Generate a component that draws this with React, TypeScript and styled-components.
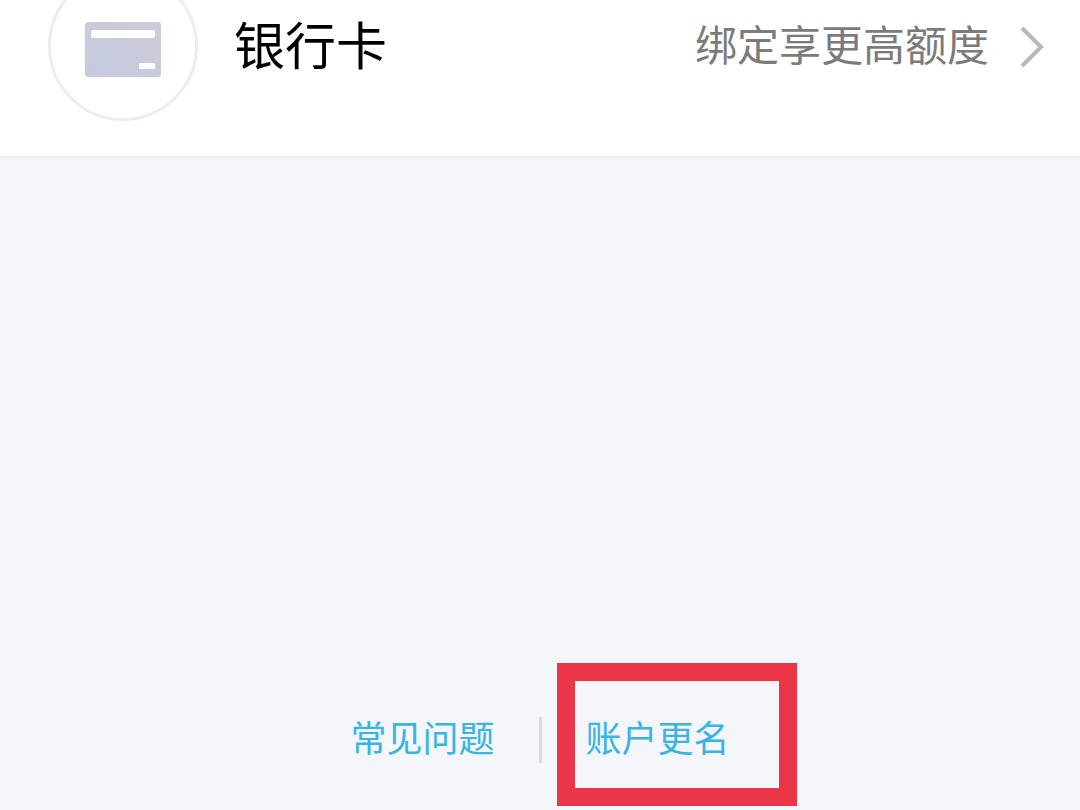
import React from "react";
import styled, { createGlobalStyle } from "styled-components";

const GlobalStyle = createGlobalStyle`
  * { box-sizing: border-box; }
  html, body { margin: 0; }
  body {
    background: #f4f6fa;
    font-family: "Noto Sans CJK SC", sans-serif;
    font-weight: 400;
  }
`;

const Page = styled.div`
  display: flex;
  flex-direction: column;
  min-height: 100vh;
`;

const BankRow = styled.a`
  display: flex;
  align-items: flex-start;
  padding: 0 36px 35px 48px;
  background: #fff;
  border-bottom: 2px solid #eeeff1;
  color: #000;
  text-decoration: none;
`;

const IconCircle = styled.span`
  display: flex;
  align-items: center;
  justify-content: center;
  flex: none;
  width: 150px;
  height: 150px;
  margin-top: -29px;
  border: 3px solid #ebedf4;
  border-radius: 50%;
`;

const RowText = styled.span`
  display: flex;
  flex: 1;
  align-items: center;
  justify-content: space-between;
  height: 94px;
  margin-left: 36px;
`;

const Label = styled.span<{ $muted?: boolean }>`
  padding-bottom: 8px;
  color: ${(p) => (p.$muted ? "#7b7b7b" : "#000")};
  font-size: ${(p) => (p.$muted ? 42 : 51)}px;
  line-height: 72px;
`;

const Action = styled.span`
  display: flex;
  align-items: center;
  gap: 30px;
`;

const Footer = styled.footer`
  display: flex;
  align-items: center;
  justify-content: center;
  gap: 44px;
  margin-top: auto;
  padding-bottom: 40px;
`;

const FooterLink = styled.a`
  position: relative;
  padding-bottom: 8px;
  color: #3bb4e2;
  font-size: 36px;
  line-height: 52px;
  text-decoration: none;
`;

const Divider = styled.span`
  width: 3px;
  height: 46px;
  background: #dcdcde;
`;

const Highlight = styled.span`
  position: absolute;
  top: -47px;
  left: -29px;
  width: 240px;
  height: 143px;
  border: 18px solid #eb3549;
  pointer-events: none;
`;

export default function App() {
  return (
    <Page>
      <GlobalStyle />
      <BankRow href="#bank">
        <IconCircle>
          <svg width="76" height="62" viewBox="0 0 76 62" aria-hidden="true">
            <defs>
              <linearGradient id="card" x1="0" y1="1" x2="1" y2="0.4">
                <stop offset="0" stopColor="#c5cbe0" />
                <stop offset="1" stopColor="#cccbd9" />
              </linearGradient>
            </defs>
            <rect y="7" width="76" height="55" rx="3" fill="url(#card)" />
            <rect x="6" y="15" width="64" height="8" rx="2" fill="#fff" />
            <rect x="54" y="48" width="16" height="6" rx="1" fill="#fff" />
          </svg>
        </IconCircle>
        <RowText>
          <Label>银行卡</Label>
          <Action>
            <Label $muted>绑定享更高额度</Label>
            <svg width="25" height="42" viewBox="0 0 25 42" fill="none" aria-hidden="true">
              <path d="M3 2 22 21 3 40" stroke="#b8b8b8" strokeWidth="4" />
            </svg>
          </Action>
        </RowText>
      </BankRow>
      <Footer>
        <FooterLink href="#faq">常见问题</FooterLink>
        <Divider />
        <FooterLink href="#rename">
          账户更名
          <Highlight />
        </FooterLink>
      </Footer>
    </Page>
  );
}
